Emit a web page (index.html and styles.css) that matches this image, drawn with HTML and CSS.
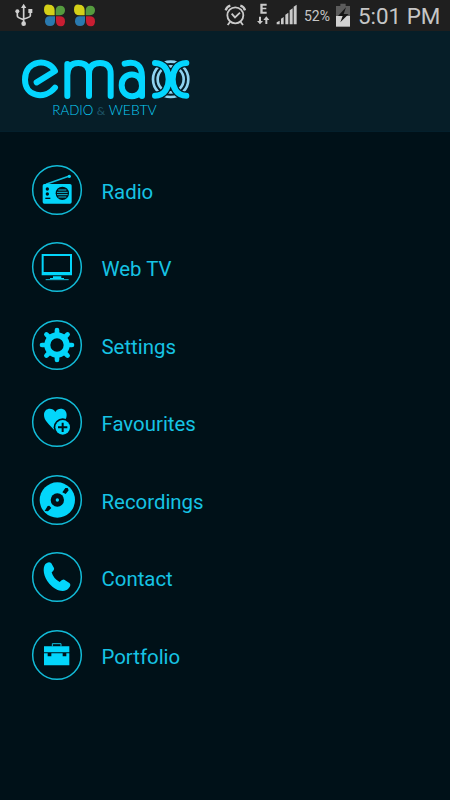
FILE: index.html
```html
<!DOCTYPE html>
<html lang="en">
<head>
<meta charset="utf-8">
<title>Emax Radio &amp; WebTV</title>
<link rel="stylesheet" href="styles.css">
</head>
<body>
<div class="status">
  <svg class="status-left" width="110" height="31" viewBox="0 0 330 93">
    <g stroke="#d0d0d0" fill="none" stroke-width="5"><path d="M71 20V70M52 36V48Q52 53 71 59M91 37V47Q91 51 71 57"/></g>
    <g fill="#d0d0d0"><path d="M71 11l8 13H63z"/><circle cx="71" cy="71" r="7"/><circle cx="52" cy="34" r="6"/><path d="M85 27h12v12H85z"/></g>
    <g id="clover">
      <path fill="#d4d018" d="M147 14q17 0 17 17v15h-15q-17 0-17-17t15-15z"/>
      <path fill="#559b3e" d="M181 17q14 0 14 14t-15 15h-13V33q0-16 14-16z"/>
      <path fill="#2a79ae" d="M149 49h16v14q0 15-15 15t-15-14q0-15 14-15z"/>
      <path fill="#c81e32" d="M168 49h11q16 0 16 15t-12 15q-15 0-15-16z"/>
    </g>
    <use href="#clover" x="90"/>
  </svg>
  <div class="status-right">
    <svg width="84" height="31" viewBox="0 0 252 93">
      <g stroke="#cacaca" fill="none" stroke-width="5.5"><circle cx="61" cy="46" r="24"/><path d="M50 41l10 11 15-14M45 66l-7 9M77 66l7 9"/><path stroke-width="7" d="M32 31q3-11 14-14M76 17q11 3 14 14"/></g>
      <g fill="#cacaca" transform="translate(26 0)"><path d="M110 11h19v6h-12v6h11v5h-11v7h12v6h-19zM106 50h6v13h6l-9 10-9-10h6zM125 72h6V60h6l-9-11-9 11h6z"/><path d="M159 73V67l9-5v11zM172 73V56l8-5v22zM185 73V44l9-6v35zM198 73V31l9-6v48zM210 73V20l9-6v59z"/></g>
    </svg>
    <span class="percent">52%</span>
    <svg class="battery" width="16" height="25" viewBox="0 0 48 75"><path fill="#5c5c5c" d="M16 2h16v7h13v30H3V9h13z"/><path fill="#d2d2d2" d="M3 39h42v32H3z"/><path fill="#151515" d="M33 13L9 39h14l-7 19 25-25H26z"/></svg>
    <span class="clock">5:01 PM</span>
  </div>
</div>
<header class="brand">
  <svg width="180" height="86" viewBox="0 0 540 258">
    <g fill="none" stroke="#8fd3f0" stroke-width="8"><circle cx="467" cy="103" r="39"/><circle cx="467" cy="103" r="53"/></g>
    <g fill="none" stroke="#061e28" stroke-width="25"><path d="M420 54C450 54 461 80 461 103S450 152 420 152M514 54C484 54 473 80 473 103S484 152 514 152"/></g>
    <g fill="none" stroke="#03d6ff" stroke-width="18" stroke-linecap="round" stroke-linejoin="round">
      <path d="M120 128C88 166 30 154 30 104C30 44 101 38 120 78L65 112"/>
      <path d="M157 153V57M157 91Q157 54 190 54T222 88V153M222 88Q222 54 255 54T287 88V153"/>
      <path d="M329 56Q381 43 381 96V153M381 123C381 75 320 79 320 121C320 163 381 165 381 123"/>
      <path d="M420 54C450 54 461 80 461 103S450 152 420 152M514 54C484 54 473 80 473 103S484 152 514 152"/>
    </g>
    <g class="tagline"><text x="112" y="209" textLength="123" lengthAdjust="spacingAndGlyphs">RADIO</text><text class="dim" x="245" y="209">&amp;</text><text x="281" y="209" textLength="144" lengthAdjust="spacingAndGlyphs">WEBTV</text></g>
  </svg>
</header>
<nav class="menu">
  <a class="item"><svg class="icon" viewBox="0 0 150 150"><circle class="ring" cx="75" cy="75" r="73"/><path class="line" d="M42 58L110 34"/><circle class="solid" cx="112" cy="34" r="5"/><rect class="solid" x="32" y="57" width="87" height="59" rx="5"/><g class="hole"><circle cx="46" cy="72" r="5"/><circle cx="46" cy="87" r="5"/><path d="M40 98h15v4H40z"/><circle cx="91" cy="85" r="20"/></g><path class="line thin" d="M79 75h24M75 82h32M75 89h32M79 96h24"/></svg><span>Radio</span></a>
  <a class="item"><svg class="icon" viewBox="0 0 150 150"><circle class="ring" cx="75" cy="75" r="73"/><path class="solid" fill-rule="evenodd" d="M29 36h91v64H29zM35 42v48h79V42zM63 103h25v5h8v3H54v-3h9z"/><path class="line thin" d="M41 113h69"/></svg><span>Web TV</span></a>
  <a class="item"><svg class="icon" viewBox="0 0 150 150"><circle class="ring" cx="75" cy="75" r="73"/><circle class="gear" cx="75" cy="75" r="29"/><g class="teeth"><path id="teeth" d="M75 39V30M75 111V120M39 75H30M111 75H120"/><use href="#teeth" transform="rotate(45 75 75)"/></g></svg><span>Settings</span></a>
  <a class="item"><svg class="icon" viewBox="0 0 150 150"><circle class="ring" cx="75" cy="75" r="73"/><path class="solid" d="M70 102C51 82 36 71 36 54C36 32 62 30 70 45C78 30 104 32 104 54C104 72 87 84 70 102z"/><circle class="hole" cx="92" cy="91" r="27"/><circle class="solid" cx="92" cy="91" r="22"/><path class="plus" d="M78 91h28M92 77v28"/></svg><span>Favourites</span></a>
  <a class="item"><svg class="icon" viewBox="0 0 150 150"><circle class="ring" cx="75" cy="75" r="73"/><circle class="solid" cx="76" cy="75" r="53"/><circle class="hole" cx="76" cy="75" r="20"/><circle class="solid" cx="76" cy="75" r="5"/><path class="hole" d="M91 52l9-13 7 0 3 7-9 11zM38 108l9-15 5-1 6 7-10 10z"/></svg><span>Recordings</span></a>
  <a class="item"><svg class="icon" viewBox="0 0 150 150"><circle class="ring" cx="75" cy="75" r="73"/><path class="solid" d="M40 36Q51 26 58 34L66 48Q68 54 59 61Q64 80 83 90Q91 80 97 83L112 93Q119 99 110 109C97 124 70 116 52 95C34 74 31 48 40 36z"/></svg><span>Contact</span></a>
  <a class="item"><svg class="icon" viewBox="0 0 150 150"><circle class="ring" cx="75" cy="75" r="73"/><path class="line thin" d="M61 49V41h26v8"/><path class="solid" d="M36 49h76v18H36zM36 70h11v9h11v-9h34v9h11v-9h9v36H36z"/></svg><span>Portfolio</span></a>
</nav>
</body>
</html>
```
FILE: styles.css
```css
* { box-sizing: border-box; }
body { margin: 0; width: 450px; height: 800px; overflow: hidden; background: #001118; font-family: Roboto, sans-serif; }
.status { height: 31px; background: #1f1f1f; display: flex; justify-content: space-between; color: #c6c6c6; }
.status svg { display: block; }
.status-right { display: flex; align-items: center; padding-right: 10px; }
.status-right > svg:first-child { margin-right: 5px; }
.percent { font-size: 14px; width: 27px; white-space: nowrap; }
.battery { margin: 0 7px 0 4px; }
.clock { font-size: 22.4px; width: 82px; white-space: nowrap; }
.brand { height: 101px; background: #061e28; padding: 14px 0 0 15px; border-bottom: 1px solid #04202c; }
.brand svg { display: block; }
.tagline { font-family: Lato, sans-serif; font-size: 38px; font-weight: 300; fill: #0cd0f8; }
.tagline .dim { fill: #1d5264; font-size: 36px; font-weight: 400; }
.menu { padding: 32.7px 0 0 32px; display: flex; flex-direction: column; gap: 27.5px; }
.item { display: flex; align-items: center; gap: 19.5px; height: 50px; color: #16c3e4; font-size: 20.4px; }
.item span { padding-top: 4px; }
.icon { width: 50px; height: 50px; overflow: visible; flex: none; }
.ring { fill: none; stroke: #12bcd8; stroke-width: 4.5; }
.solid { fill: #03d6fb; }
.hole { fill: #001118; }
.line { fill: none; stroke: #10bedc; stroke-width: 5; }
.line.thin { stroke-width: 3; }
.gear { fill: none; stroke: #03d6fb; stroke-width: 18; }
.teeth { fill: none; stroke: #03d6fb; stroke-width: 14; stroke-linecap: round; }
.plus { fill: none; stroke: #001118; stroke-width: 6; }
```
